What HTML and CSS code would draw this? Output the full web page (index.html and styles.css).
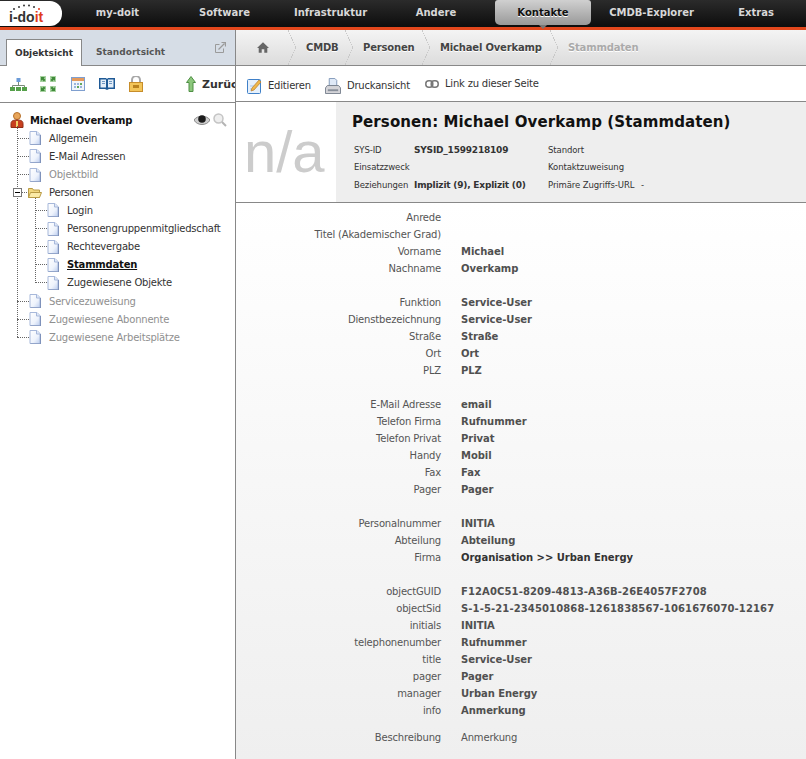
FILE: index.html
```html
<!DOCTYPE html>
<html lang="de">
<head>
    <meta charset="UTF-8">
    <meta name="viewport" content="width=device-width, initial-scale=1.0">
    <title>i-doit - Personen: Michael Overkamp</title>
    <link rel="stylesheet" href="styles.css">
</head>
<body>

    <svg class="icon-defs" width="0" height="0">
        <defs>
            <linearGradient id="pageFill" x1="0" y1="0" x2="1" y2="1">
                <stop offset="0" stop-color="#ffffff"/>
                <stop offset=".6" stop-color="#eef3fc"/>
                <stop offset="1" stop-color="#bccdee"/>
            </linearGradient>
            <symbol id="pageIcon" viewBox="0 0 12 14">
                <path d="M1 .5h7l3 3v10h-10z" fill="url(#pageFill)" stroke="#a7b8da"/>
                <path d="M11.500 4v10h-10" fill="none" stroke="#7f92bb"/>
                <path d="M7.500 .5v3.500h3.500" fill="#dfe8f8" stroke="#a7b8da"/>
            </symbol>
        </defs>
    </svg>

    <!-- Top navigation -->
    <header class="topbar">
        <div class="logo">
            <svg class="logo-dots" width="30" height="6" viewBox="0 0 30 6">
                <circle cx="3" cy="5" r="1" fill="#333"/>
                <circle cx="8" cy="3" r="1" fill="#333"/>
                <circle cx="13" cy="1.500" r="1" fill="#333"/>
                <circle cx="18" cy="1.500" r="1" fill="#333"/>
                <circle cx="23" cy="3" r="1" fill="#333"/>
                <circle cx="28" cy="5" r="1" fill="#e03a1c"/>
            </svg>
            <span>i-do<em>it</em></span>
        </div>
        <nav class="mainnav">
            <a>my-doit</a>
            <a>Software</a>
            <a>Infrastruktur</a>
            <a>Andere</a>
            <a class="active">Kontakte</a>
            <a>CMDB-Explorer</a>
            <a>Extras</a>
        </nav>
    </header>

    <div class="app">
        <!-- Left tree panel -->
        <aside class="sidebar">
            <div class="tabs">
                <span class="tab active">Objektsicht</span>
                <span class="tab">Standortsicht</span>
                <svg class="tab-popout" width="11" height="11" viewBox="0 0 11 11" fill="none" stroke="#9a9a9a">
                    <path d="M8.500 6.500v4h-8v-8h4"/>
                    <path d="M3.500 7.500l6-6M6.500 .5h4v4" stroke-width="1.200"/>
                </svg>
            </div>
            <div class="tree-tools">
                <svg width="17" height="13" viewBox="0 0 17 13">
                    <rect x="6.500" y="0" width="4" height="4" fill="#6c9bd8"/>
                    <path d="M8.500 4v3M2.500 9v-1.500h12v1.500" fill="none" stroke="#7a8a7a"/>
                    <rect x="0" y="9" width="5" height="4" fill="#55a04a"/>
                    <rect x="6" y="9" width="5" height="4" fill="#55a04a"/>
                    <rect x="12" y="9" width="5" height="4" fill="#55a04a"/>
                </svg>
                <svg width="16" height="16" viewBox="0 0 16 16">
                    <rect x="0" y="0" width="6" height="6" fill="#a9d3a2"/>
                    <rect x="10" y="0" width="6" height="6" fill="#a9d3a2"/>
                    <rect x="0" y="10" width="6" height="6" fill="#a9d3a2"/>
                    <rect x="10" y="10" width="6" height="6" fill="#a9d3a2"/>
                    <path d="M1 1h4l-1.200 1.200 1.700 1.700-1.600 1.600-1.700-1.700L1 5zM15 1v4l-1.200-1.200-1.700 1.700-1.600-1.600 1.700-1.700L11 1zM1 15v-4l1.200 1.200 1.700-1.700 1.600 1.600-1.700 1.700L5 15zM15 15h-4l1.200-1.200-1.700-1.700 1.600-1.600 1.700 1.700L15 11z" fill="#3f8a3a"/>
                </svg>
                <svg width="14" height="14" viewBox="0 0 14 14">
                    <rect x=".5" y=".5" width="13" height="13" fill="#f2f5fa" stroke="#7f9fcf"/>
                    <rect x="1" y="1" width="12" height="3" fill="#e59a5c"/>
                    <path d="M3 6h2v2h-2zM6 6h2v2h-2zM9 9h2v2h-2zM3 9h2v2h-2z" fill="#9ab4dc"/>
                    <path d="M6 9h2v2h-2zM9 6h2v2h-2z" fill="#63a85a"/>
                </svg>
                <svg width="16" height="14" viewBox="0 0 16 14">
                    <path d="M0 1h7l1 1 1-1h7v11h-6l-2 1-2-1h-6z" fill="#1f5a96"/>
                    <path d="M1.500 2.500h5.500v8h-5.500zM9 2.500h5.500v8h-5.500z" fill="#e4eef8"/>
                    <path d="M3 4.500h3M3 6.500h3M10 4.500h3M10 6.500h3" stroke="#6f97c2"/>
                </svg>
                <svg width="14" height="16" viewBox="0 0 14 16">
                    <path d="M3 7v-3a4 4 0 0 1 8 0v3" fill="none" stroke="#a8a8a8" stroke-width="2"/>
                    <rect x=".5" y="6.500" width="13" height="9" fill="#f3c559" stroke="#c78d2a"/>
                    <rect x="4" y="9" width="6" height="3" fill="#b9821f"/>
                </svg>
                <a class="back-link">
                    <svg width="10" height="16" viewBox="0 0 10 16">
                        <path d="M5 .5l4.500 6h-2.500v9h-4v-9h-2.500z" fill="#8cc77c" stroke="#4f8f45"/>
                    </svg>
                    Zurück
                </a>
            </div>

            <div class="tree">
                <div class="tree-root">
                    <svg width="14" height="16" viewBox="0 0 14 16">
                        <circle cx="7" cy="4" r="3.500" fill="#e8a55a" stroke="#b5702a"/>
                        <path d="M1 15.500v-4c0-2.500 2-3.500 6-3.500s6 1 6 3.500v4z" fill="#c8401f" stroke="#8f2d14"/>
                        <path d="M6 9h2v6h-2z" fill="#f1d06a"/>
                    </svg>
                    <strong>Michael Overkamp</strong>
                    <svg class="root-eye" width="16" height="12" viewBox="0 0 16 12">
                        <path d="M0 6c3-5 13-5 16 0-3 6-13 6-16 0z" fill="#cfcfcf" stroke="#8a8a8a"/>
                        <circle cx="8" cy="5" r="3.800" fill="#1c1c1c"/>
                    </svg>
                    <svg width="14" height="14" viewBox="0 0 14 14" fill="none">
                        <circle cx="5.500" cy="5.500" r="4.500" fill="#eee" stroke="#c4c4c4" stroke-width="1.500"/>
                        <path d="M9 9l4 4" stroke="#b4b4b4" stroke-width="2"/>
                    </svg>
                </div>
                <ul class="tree-list">
                    <li><span class="branch"></span><svg class="page"><use href="#pageIcon"/></svg><a>Allgemein</a></li>
                    <li><span class="branch"></span><svg class="page"><use href="#pageIcon"/></svg><a>E-Mail Adressen</a></li>
                    <li class="off"><span class="branch"></span><svg class="page"><use href="#pageIcon"/></svg><a>Objektbild</a></li>
                    <li>
                        <span class="branch"></span>
                        <span class="toggle"></span>
                        <svg class="folder" width="14" height="11" viewBox="0 0 14 11">
                            <path d="M.5 10.500v-9h4l1 1.500h6v7.500z" fill="#f2d77e" stroke="#b89a45"/>
                            <path d="M.5 10.500l2-5h11l-2 5z" fill="#fbeaa6" stroke="#b89a45"/>
                        </svg>
                        <a>Personen</a>
                    </li>
                    <li class="sub">
                        <ul class="tree-list nested">
                            <li><span class="branch"></span><svg class="page"><use href="#pageIcon"/></svg><a>Login</a></li>
                            <li><span class="branch"></span><svg class="page"><use href="#pageIcon"/></svg><a>Personengruppenmitgliedschaft</a></li>
                            <li><span class="branch"></span><svg class="page"><use href="#pageIcon"/></svg><a>Rechtevergabe</a></li>
                            <li class="current"><span class="branch"></span><svg class="page"><use href="#pageIcon"/></svg><a>Stammdaten</a></li>
                            <li><span class="branch"></span><svg class="page"><use href="#pageIcon"/></svg><a>Zugewiesene Objekte</a></li>
                        </ul>
                    </li>
                    <li class="off"><span class="branch"></span><svg class="page"><use href="#pageIcon"/></svg><a>Servicezuweisung</a></li>
                    <li class="off"><span class="branch"></span><svg class="page"><use href="#pageIcon"/></svg><a>Zugewiesene Abonnente</a></li>
                    <li class="off"><span class="branch"></span><svg class="page"><use href="#pageIcon"/></svg><a>Zugewiesene Arbeitsplätze</a></li>
                </ul>
            </div>
        </aside>

        <main class="content">
            <!-- Breadcrumb -->
            <div class="breadcrumb">
                <a class="crumb home">
                    <svg width="12" height="11" viewBox="0 0 14 12" fill="#666">
                        <path d="M7 0l7 6.500h-2v5.500h-3.500v-4h-3v4h-3.500v-5.500h-2z"/>
                    </svg>
                </a>
                <a class="crumb crumb-cmdb">CMDB</a>
                <a class="crumb crumb-persons">Personen</a>
                <a class="crumb crumb-name">Michael Overkamp</a>
                <a class="crumb last">Stammdaten</a>
            </div>

            <!-- Actions -->
            <div class="actions">
                <a class="action">
                    <svg width="15" height="16" viewBox="0 0 15 16">
                        <rect x=".5" y="1.500" width="13" height="14" rx="1" fill="#e6f0fb" stroke="#3f80c8"/>
                        <path d="M3 8h5M3 11h3" stroke="#a9c6e8"/>
                        <path d="M4 13l1-3 7-8 2 2-7 8z" fill="#f0b84a" stroke="#b5792a" stroke-width=".7"/>
                    </svg>
                    Editieren
                </a>
                <a class="action">
                    <svg width="16" height="16" viewBox="0 0 17 17">
                        <path d="M4.500 8v-7.500h6l2 2v5.500z" fill="#dfe9f7" stroke="#7f96b8"/>
                        <path d="M.5 16.500v-6l2-2.500h12l2 2.500v6z" fill="#d4d4d8" stroke="#77808e"/>
                        <rect x="3" y="12" width="11" height="2" fill="#888f9a"/>
                    </svg>
                    Druckansicht
                </a>
                <a class="action action-link">
                    <svg width="14" height="8" viewBox="0 0 14 8" fill="none" stroke="#777" stroke-width="1.500">
                        <rect x=".8" y=".8" width="7" height="6.400" rx="3"/>
                        <rect x="6.200" y=".8" width="7" height="6.400" rx="3"/>
                    </svg>
                    Link zu dieser Seite
                </a>
            </div>

            <!-- Object head -->
            <section class="objhead">
                <div class="objimage">n/a</div>
                <div class="objinfo">
                    <h1>Personen: Michael Overkamp (Stammdaten)</h1>
                    <div class="objgrid">
                        <span>SYS-ID</span><b>SYSID_1599218109</b><span>Standort</span><span></span>
                        <span>Einsatzzweck</span><b></b><span>Kontaktzuweisung</span><span></span>
                        <span>Beziehungen</span><b>Implizit (9), Explizit (0)</b><span>Primäre Zugriffs-URL</span><span>-</span>
                    </div>
                </div>
            </section>

            <!-- Category data -->
            <div class="fields">
                <span>Anrede</span><b></b>
                <span>Titel (Akademischer Grad)</span><b></b>
                <span>Vorname</span><b>Michael</b>
                <span>Nachname</span><b>Overkamp</b>
                <span class="gap"></span>

                <span>Funktion</span><b>Service-User</b>
                <span>Dienstbezeichnung</span><b>Service-User</b>
                <span>Straße</span><b>Straße</b>
                <span>Ort</span><b>Ort</b>
                <span>PLZ</span><b>PLZ</b>
                <span class="gap"></span>

                <span>E-Mail Adresse</span><b>email</b>
                <span>Telefon Firma</span><b>Rufnummer</b>
                <span>Telefon Privat</span><b>Privat</b>
                <span>Handy</span><b>Mobil</b>
                <span>Fax</span><b>Fax</b>
                <span>Pager</span><b>Pager</b>
                <span class="gap"></span>

                <span>Personalnummer</span><b>INITIA</b>
                <span>Abteilung</span><b>Abteilung</b>
                <span>Firma</span><b class="dark">Organisation &gt;&gt; Urban Energy</b>
                <span class="gap"></span>

                <span>objectGUID</span><b class="wide">F12A0C51-8209-4813-A36B-26E4057F2708</b>
                <span>objectSid</span><b class="wide">S-1-5-21-2345010868-1261838567-1061676070-12167</b>
                <span>initials</span><b>INITIA</b>
                <span>telephonenumber</span><b>Rufnummer</b>
                <span>title</span><b>Service-User</b>
                <span>pager</span><b>Pager</b>
                <span>manager</span><b>Urban Energy</b>
                <span>info</span><b>Anmerkung</b>

                <span class="desc">Beschreibung</span><span class="desc desc-value">Anmerkung</span>
            </div>
        </main>
    </div>

</body>
</html>
```

FILE: styles.css
```css
/* General Styling */
* {
    box-sizing: border-box;
}

html, body {
    height: 100%;
}

body {
    margin: 0;
    overflow: hidden;
    background-color: #fff;
    color: #333;
    font-family: "DejaVu Sans", Verdana, sans-serif;
    font-size: 10px;
}

.icon-defs {
    position: absolute;
}

/* Top bar */
.topbar {
    display: flex;
    height: 30px;
    background: linear-gradient(#2b2b2b, #0d0d0d);
    border-bottom: 3px solid #e2471c;
}

.logo {
    position: relative;
    width: 62px;
    height: 25px;
    margin-top: 1px;
    flex: none;
    padding: 8px 0 0 9px;
    background-color: #fff;
    border-radius: 0 12px 12px 0;
    color: #333;
    font-family: "Liberation Sans", Arial, sans-serif;
    font-size: 14px;
    line-height: 16px;
    font-weight: bold;
}

.logo em {
    color: #e03a1c;
    font-style: normal;
}

.logo-dots {
    position: absolute;
    top: 3px;
    left: 11px;
}

.mainnav {
    flex: 1;
    display: grid;
    grid-template-columns: 109px 105px 107px 104px 110px 107px 102px;
    margin-left: 1px;
}

.mainnav a {
    text-align: center;
    color: #d8d8d8;
    font-weight: bold;
    font-size: 10px;
    line-height: 25px;
}

.mainnav a.active {
    position: relative;
    margin: 0 7px;
    height: 25px;
    background: linear-gradient(#d0d0d0, #999);
    border-radius: 3px 3px 5px 5px;
    color: #111;
    text-shadow: 0 1px 0 #fff;
}

.mainnav a.active::after {
    content: "";
    position: absolute;
    top: 25px;
    left: 44px;
    border: 4px solid transparent;
    border-top-color: #777;
    border-bottom-width: 0;
}

/* Layout */
.app {
    display: flex;
    height: calc(100% - 30px);
}

.sidebar {
    width: 236px;
    flex: none;
    border-right: 1px solid #888;
}

.content {
    flex: 1;
    min-width: 0;
    display: flex;
    flex-direction: column;
}

/* Tabs */
.tabs {
    display: flex;
    align-items: flex-end;
    height: 36px;
    padding-left: 6px;
    background-color: #d6dde6;
    border-bottom: 1px solid #888;
}

.tab {
    height: 26px;
    padding: 0 14px;
    color: #555;
    font-size: 9px;
    font-weight: bold;
    line-height: 26px;
}

.tab.active {
    height: 27px;
    width: 76px;
    padding: 0 0 0 8px;
    margin-bottom: -1px;
    background-color: #fff;
    border: 1px solid #888;
    border-bottom: none;
    color: #333;
}

.tab-popout {
    margin: 0 9px 12px auto;
}

/* Tree tools */
.tree-tools {
    display: flex;
    align-items: center;
    gap: 13px;
    height: 37px;
    padding-left: 10px;
    overflow: hidden;
    border-bottom: 1px solid #888;
}

.tree-tools > * {
    flex: none;
}

.tree-tools svg:nth-child(3) {
    margin-left: 2px;
}

.tree-tools svg:nth-child(4),
.tree-tools svg:nth-child(5) {
    margin-left: 1px;
}

.back-link {
    display: flex;
    align-items: center;
    gap: 6px;
    margin-left: 30px;
    color: #333;
    font-size: 11px;
    font-weight: bold;
    white-space: nowrap;
}

/* Tree */
.tree {
    padding: 8.300px 8px 0 10px;
    letter-spacing: -0.2px;
}

.tree-root {
    display: flex;
    align-items: center;
    height: 18px;
    color: #111;
}

.tree-root strong {
    margin-left: 6px;
    letter-spacing: -0.15px;
}

.root-eye {
    margin-left: auto;
    margin-right: 3px;
}

.tree-list {
    position: relative;
    list-style: none;
    margin: 0 0 0 7px;
    padding: 0;
}

.tree-list::before {
    content: "";
    position: absolute;
    top: -3px;
    bottom: 9px;
    left: 0;
    border-left: 1px dotted #666;
}

.tree-list li {
    display: flex;
    align-items: center;
    height: 18.100px;
}

.tree-list li.sub {
    display: block;
    height: auto;
}

.tree-list.nested {
    margin: -0.3px 0 0.3px 18px;
}

.branch {
    width: 12px;
    flex: none;
    border-top: 1px dotted #666;
}

.page {
    width: 12px;
    height: 14px;
    flex: none;
    margin-right: 8px;
}

.folder {
    flex: none;
    margin-left: -1px;
    margin-right: 7px;
}

.toggle {
    position: absolute;
    left: -4px;
    width: 9px;
    height: 9px;
    background: linear-gradient(#000, #000) center / 5px 1px no-repeat #fff;
    border: 1px solid #777;
}

.tree-list a {
    color: #333;
    white-space: nowrap;
}

.tree-list li.off > a {
    color: #8f8f8f;
}

.tree-list li.current > a {
    color: #111;
    font-weight: bold;
    text-decoration: underline;
}

/* Breadcrumb */
.breadcrumb {
    display: flex;
    flex: none;
    height: 36px;
    background: linear-gradient(#f4f4f4, #dcdcdc);
    border-bottom: 1px solid #888;
}

.crumb {
    position: relative;
    display: flex;
    align-items: center;
    padding-left: 18px;
    color: #444;
    font-weight: bold;
    letter-spacing: -0.18px;
    text-shadow: 0 1px 0 #fff;
}

.crumb.home {
    width: 52px;
    padding-left: 21px;
}

.crumb-cmdb {
    width: 57px;
}

.crumb-persons {
    width: 77px;
}

.crumb-name {
    width: 128px;
}

.crumb::after {
    content: "";
    position: absolute;
    top: 0;
    right: -8px;
    width: 8px;
    height: 35px;
    background:
        linear-gradient(to top right, transparent 48%, #c8c8c8 48%, #c8c8c8 52%, transparent 52%) 0 0 / 8px 18px no-repeat,
        linear-gradient(to bottom right, transparent 48%, #c8c8c8 48%, #c8c8c8 52%, transparent 52%) 0 100% / 8px 18px no-repeat;
}

.crumb.last {
    color: #aaa;
}

.crumb.last::after {
    display: none;
}

/* Actions */
.actions {
    display: flex;
    flex: none;
    align-items: center;
    gap: 14px;
    height: 36px;
    padding: 4px 0 0 11px;
    color: #333;
    letter-spacing: -0.2px;
    border-bottom: 1px solid #888;
}

.action {
    display: flex;
    align-items: center;
    gap: 6px;
}

.action-link {
    margin-top: -4px;
    margin-left: 1px;
}

/* Object head */
.objhead {
    display: flex;
    flex: none;
    height: 101px;
    border-bottom: 1px solid #888;
}

.objimage {
    width: 100px;
    flex: none;
    padding: 0 0 3px 8px;
    color: #ccc;
    font-family: "Liberation Sans", Arial, sans-serif;
    font-size: 58px;
    line-height: 100px;
}

.objinfo {
    flex: 1;
    padding: 10px 0 0 16px;
    background-color: #eee;
}

.objinfo h1 {
    margin: 0 0 9px;
    color: #111;
    font-size: 15px;
    letter-spacing: 0.1px;
    line-height: 20px;
}

.objgrid {
    display: grid;
    grid-template-columns: 60px 134px 93px 1fr;
    grid-auto-rows: 17.500px;
    align-items: center;
    padding-left: 2px;
    font-size: 8.500px;
    letter-spacing: -0.1px;
    white-space: nowrap;
}

.objgrid b {
    font-size: 9px;
    letter-spacing: -0.2px;
}

/* Fields */
.fields {
    flex: 1;
    display: grid;
    grid-template-columns: 205px 1fr;
    column-gap: 20px;
    grid-auto-rows: 17px;
    align-content: start;
    align-items: center;
    padding-top: 6px;
    background: linear-gradient(#fff, #efefef);
    color: #555;
    letter-spacing: -0.17px;
}

.fields span {
    text-align: right;
}

.fields b {
    color: #505050;
    letter-spacing: -0.05px;
}

.fields b.dark {
    color: #333;
}

.fields b.wide {
    letter-spacing: 0.12px;
}

.fields .gap {
    grid-column: 1 / -1;
}

.fields .desc {
    margin-top: 20px;
}

.fields .desc-value {
    text-align: left;
}
```
